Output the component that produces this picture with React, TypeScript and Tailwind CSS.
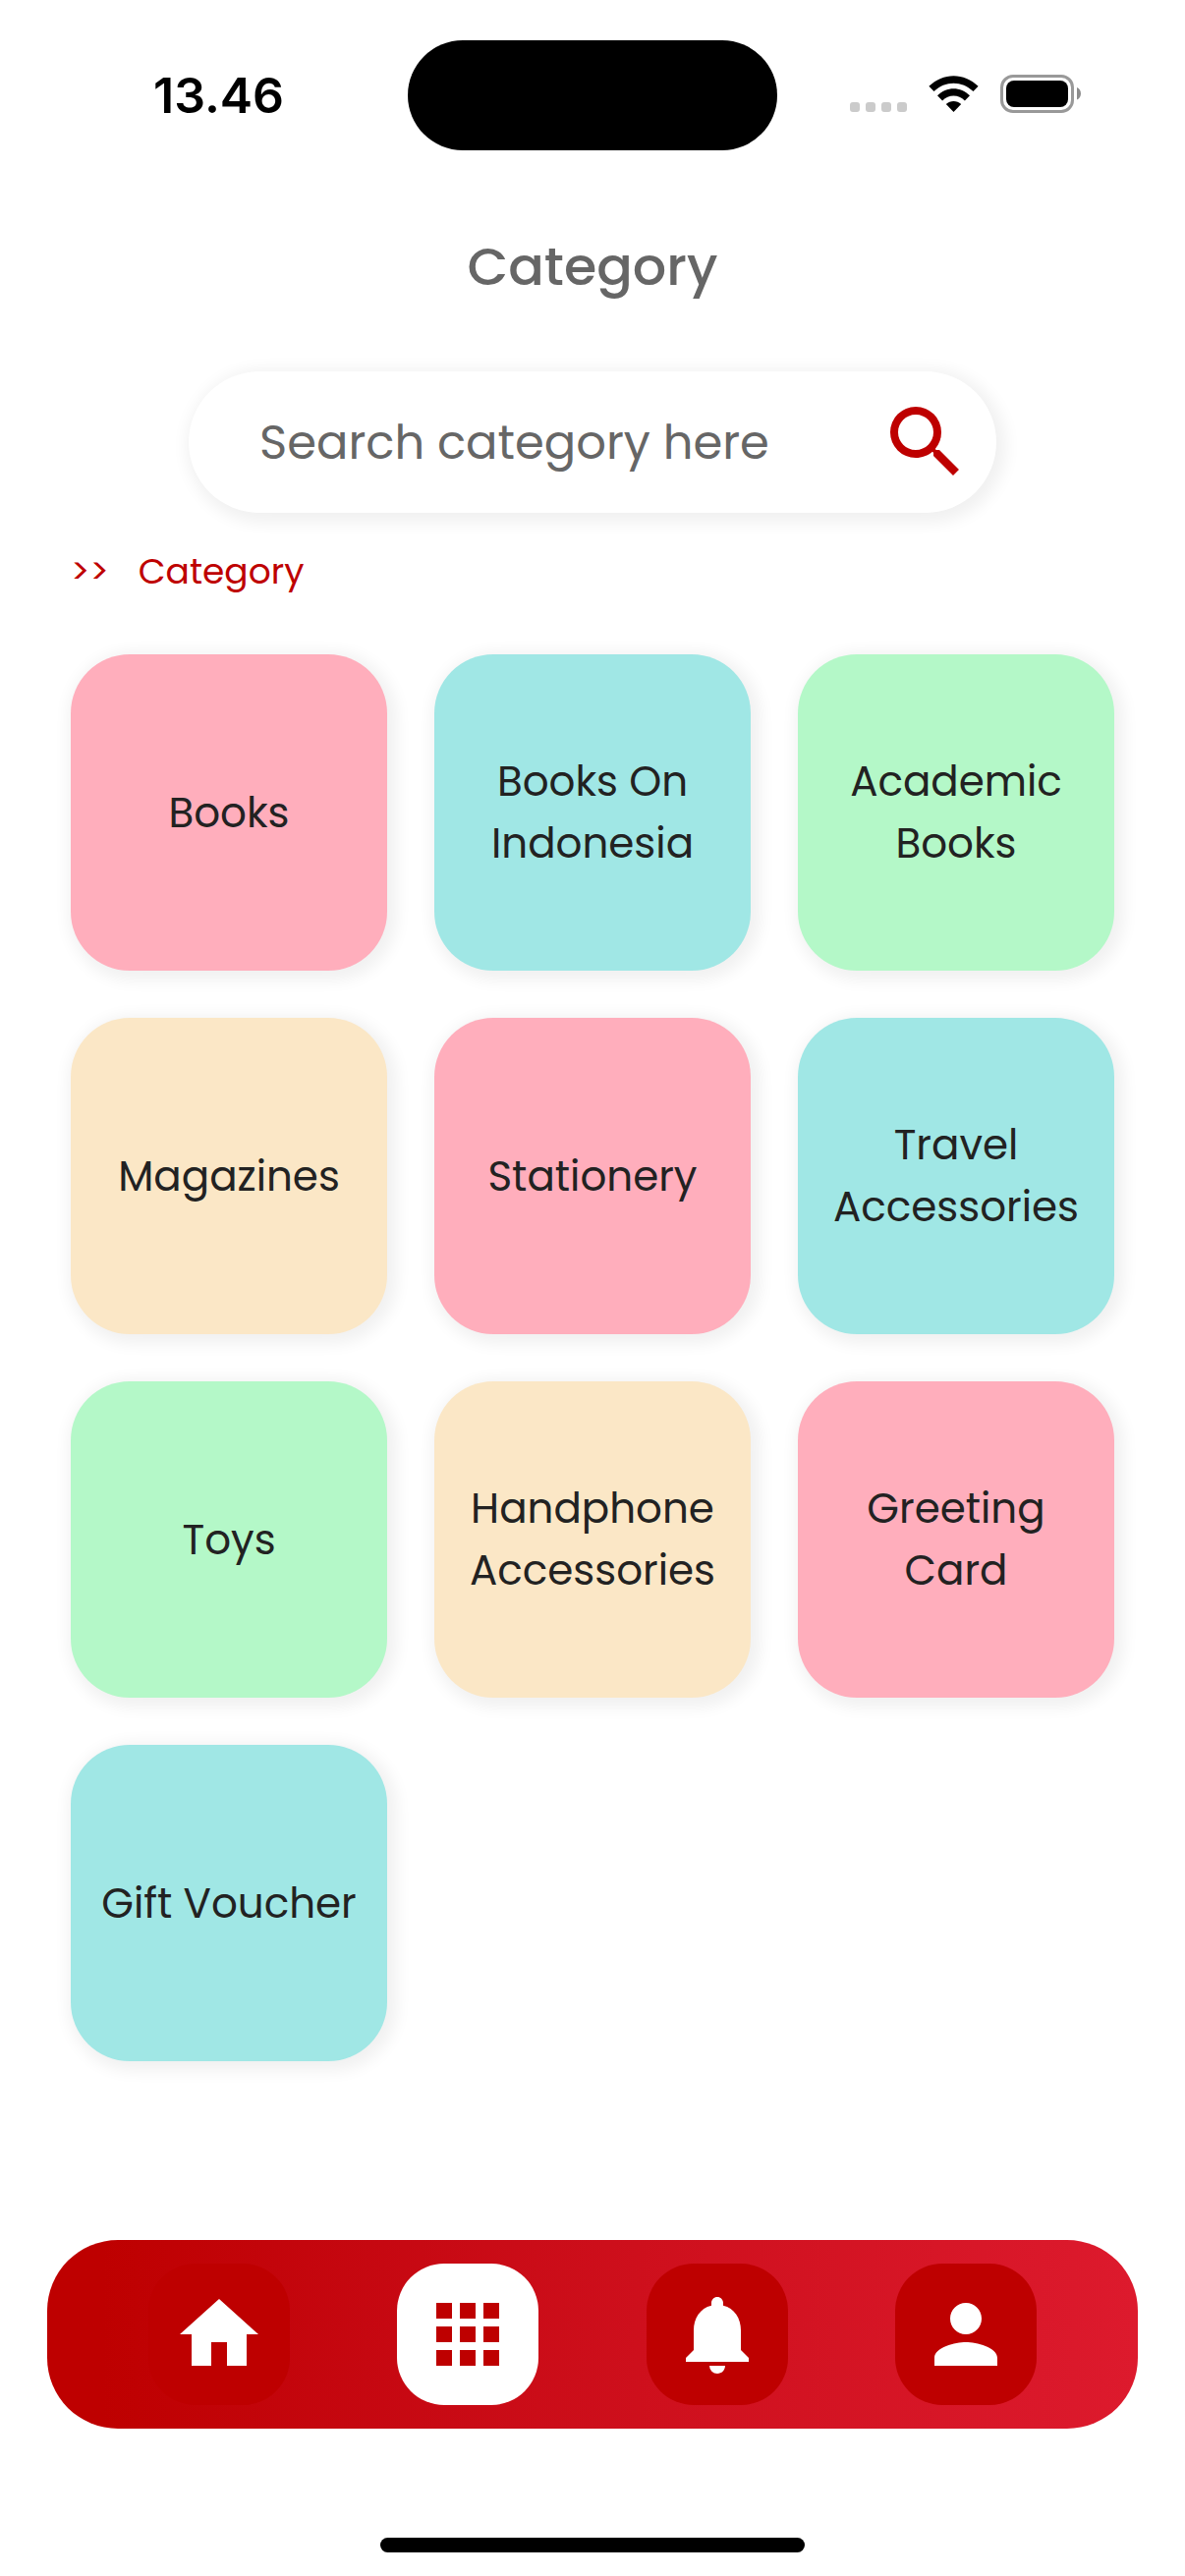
import React from "react";
import { MdApps, MdHome, MdNotifications, MdPerson, MdSearch } from "react-icons/md";

const categories = [
  { name: "Books", color: "bg-[#ffaebc]" },
  { name: "Books On Indonesia", color: "bg-[#a0e7e5]" },
  { name: "Academic Books", color: "bg-[#b4f8c8]" },
  { name: "Magazines", color: "bg-[#fbe7c6]" },
  { name: "Stationery", color: "bg-[#ffaebc]" },
  { name: "Travel Accessories", color: "bg-[#a0e7e5]" },
  { name: "Toys", color: "bg-[#b4f8c8]" },
  { name: "Handphone Accessories", color: "bg-[#fbe7c6]" },
  { name: "Greeting Card", color: "bg-[#ffaebc]" },
  { name: "Gift Voucher", color: "bg-[#a0e7e5]" },
];

const tabs = [
  { label: "Home", Icon: MdHome, active: false },
  { label: "Categories", Icon: MdApps, active: true },
  { label: "Notifications", Icon: MdNotifications, active: false },
  { label: "Profile", Icon: MdPerson, active: false },
];

function StatusBar() {
  return (
    <div className="grid grid-cols-[1fr_376px_1fr] items-center pt-[41px] text-black">
      <time className="pl-[156px] font-['Inter',sans-serif] text-[50px] leading-[60px] font-semibold">
        13.46
      </time>
      <div className="h-28 rounded-full bg-black" />
      <div className="flex items-end justify-end gap-[22px] pr-[106px] pb-1">
        <div className="flex gap-1.5 pb-px">
          {[0, 1, 2, 3].map((dot) => (
            <span key={dot} className="size-2.5 rounded-[3px] bg-[#cbcbcb]" />
          ))}
        </div>
        <svg width="51" height="38" viewBox="0 0 51 38" aria-label="Wi-Fi">
          <path d="M0.4 10.8 C14.5 -3.4 36.5 -3.4 50.6 10.8 L45.5 16 C34.3 4.9 16.7 4.9 5.5 16 Z" />
          <path d="M9 20.2 C18.3 10.8 32.7 10.8 42 20.2 L36.9 25.4 C30.5 19 20.5 19 14.1 25.4 Z" />
          <path d="M17.8 29 C22.1 25 28.9 25 33.2 29 L25.5 37 Z" />
        </svg>
        <svg width="82" height="39" viewBox="0 0 82 39" aria-label="Battery">
          <rect x="1.5" y="1.5" width="72" height="36" rx="11.5" fill="none" stroke="#999" strokeWidth="3" />
          <rect x="6" y="6" width="63" height="27" rx="8" />
          <path d="M78 13 C83.3 15.2 83.3 23.3 78 25.5 Z" fill="#8c8c8c" />
        </svg>
      </div>
    </div>
  );
}

export default function App() {
  return (
    <div className="flex min-h-screen flex-col bg-white font-['Poppins','Inter',sans-serif] text-[#222222]">
      <StatusBar />

      <h1 className="mt-20 text-center text-[54px] leading-[76px] font-medium text-[#666666]">Category</h1>

      <form
        role="search"
        className="mx-[192px] mt-[69px] flex h-36 items-center rounded-[72px] bg-white pr-6 pl-[72px] shadow-[4px_4px_16px_6px_rgba(0,0,0,0.06)]"
        onSubmit={(e) => e.preventDefault()}
      >
        <input
          type="text"
          aria-label="Search category"
          placeholder="Search category here"
          className="min-w-0 flex-1 bg-transparent pt-0.5 text-[48px] leading-[72px] outline-none placeholder:text-[#666666]"
        />
        <button type="submit" aria-label="Search" className="text-[#be0000]">
          <MdSearch size={96} />
        </button>
      </form>

      <nav aria-label="Breadcrumb" className="mx-[72px] mt-[33px] flex gap-[30px] text-[36px] leading-[54px] text-[#be0000]">
        <span>&gt;&gt;</span>
        <a href="#category">Category</a>
      </nav>

      <main className="mx-[72px] mt-[57px] grid grid-cols-3 gap-12">
        {categories.map(({ name, color }) => (
          <button
            key={name}
            type="button"
            className={`flex aspect-square items-center justify-center rounded-[60px] px-6 text-center text-[42px] leading-[63px] shadow-[4px_4px_16px_6px_rgba(0,0,0,0.06)] ${color}`}
          >
            {name}
          </button>
        ))}
      </main>

      <nav
        aria-label="Main"
        className="mx-12 mt-auto flex justify-around rounded-[72px] bg-linear-to-r from-[#be0000] from-5% to-[#dd1a2d] px-12 py-6"
      >
        {tabs.map(({ label, Icon, active }) => (
          <button
            key={label}
            type="button"
            aria-label={label}
            className={`flex size-36 items-center justify-center rounded-[48px] ${
              active ? "bg-white text-[#be0000]" : "bg-[#be0000] text-white"
            }`}
          >
            <Icon size={96} />
          </button>
        ))}
      </nav>

      <div className="mx-auto mt-[111px] mb-6 h-[15px] w-[432px] rounded-full bg-black" />
    </div>
  );
}
